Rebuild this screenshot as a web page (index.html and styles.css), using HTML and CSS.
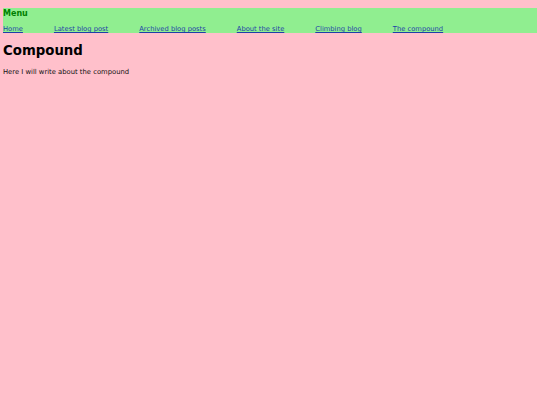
FILE: index.html
```html
<!DOCTYPE html>
<html>
<head>
<meta charset="utf-8">
<link rel="stylesheet" href="styles.css">
</head>
<body>
<nav class="menu">
  <div class="menu-title">Menu</div>
  <ul class="menu-links">
    <li><a href="#">Home</a></li>
    <li><a href="#">Latest blog post</a></li>
    <li><a href="#">Archived blog posts</a></li>
    <li><a href="#">About the site</a></li>
    <li><a href="#">Climbing blog</a></li>
    <li><a href="#">The compound</a></li>
  </ul>
</nav>
<main class="content">
  <h1 class="title">Compound</h1>
  <p class="text">Here I will write about the compound</p>
</main>
</body>
</html>
```
FILE: styles.css
```css
html, body {
  background: #ffc0cb;
}
body {
  margin: 8px 3px;
  font-family: "DejaVu Sans", sans-serif;
  color: #000;
}
.menu {
  background: #90ee90;
  padding: 0;
}
.menu-title {
  color: #008000;
  font-weight: bold;
  font-size: 8px;
  line-height: 11px;
  margin: 0 0 7px 0;
}
.menu-links {
  list-style: none;
  margin: 0;
  padding: 0;
  display: flex;
  gap: 31px;
  font-size: 6.75px;
  line-height: 7px;
}
.menu-links a {
  color: #1f3fa8;
}
.title {
  font-size: 13.3px;
  line-height: 16px;
  margin: 10px 0 9px 0;
}
.text {
  font-size: 6.8px;
  line-height: 9px;
  margin: 0;
  color: #111;
}
```
